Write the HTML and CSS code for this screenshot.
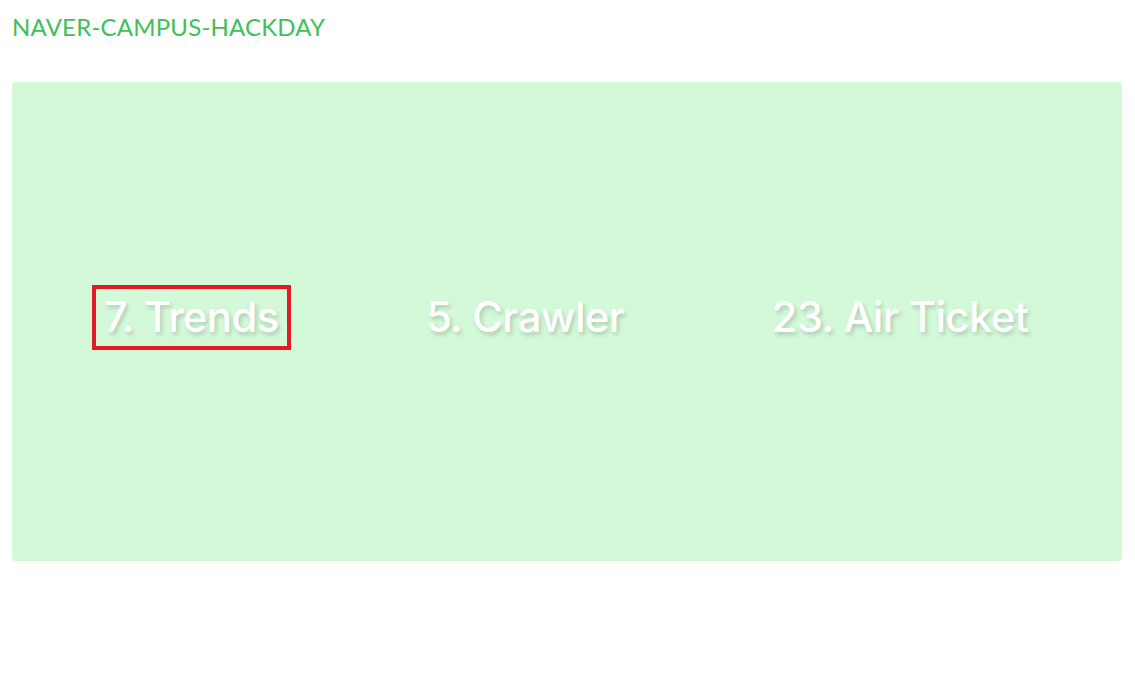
FILE: index.html
```html
<!DOCTYPE html>
<html lang="en">
<head>
<meta charset="utf-8">
<title>NAVER-CAMPUS-HACKDAY</title>
<link rel="stylesheet" href="styles.css">
</head>
<body>
<header class="site-header">
  <h1 class="brand">NAVER-CAMPUS-HACKDAY</h1>
</header>
<main class="panel">
  <a class="project project-active" href="#">7. Trends</a>
  <a class="project" href="#">5. Crawler</a>
  <a class="project" href="#">23. Air Ticket</a>
</main>
</body>
</html>
```

FILE: styles.css
```css
html, body {
  margin: 0;
  padding: 0;
  background: #ffffff;
}

body {
  padding: 12px 13px 0 12px;
  font-family: "Lato", "Open Sans", sans-serif;
}

.site-header {
  height: 70px;
}

.brand {
  margin: 0;
  padding-top: 1px;
  font-family: "Lato", sans-serif;
  font-weight: 400;
  font-size: 24px;
  line-height: 28px;
  color: #40c057;
  letter-spacing: 0.2px;
}

.panel {
  height: 479px;
  background: #d3f9d8;
  border-radius: 4px;
  display: flex;
  align-items: center;
  justify-content: space-around;
  padding: 0 20px 0 18px;
  box-sizing: border-box;
}

.project {
  display: block;
  padding: 2px 8px 3px 8px;
  border: 4px solid transparent;
  color: #ffffff;
  text-decoration: none;
  font-family: "Inter", sans-serif;
  font-weight: 500;
  font-size: 42px;
  line-height: 52px;
  letter-spacing: -0.7px;
  text-shadow: 2px 3px 4px rgba(0, 0, 0, 0.18);
  margin-top: -9px;
}

.project-active {
  border-color: #e11b22;
}
```
